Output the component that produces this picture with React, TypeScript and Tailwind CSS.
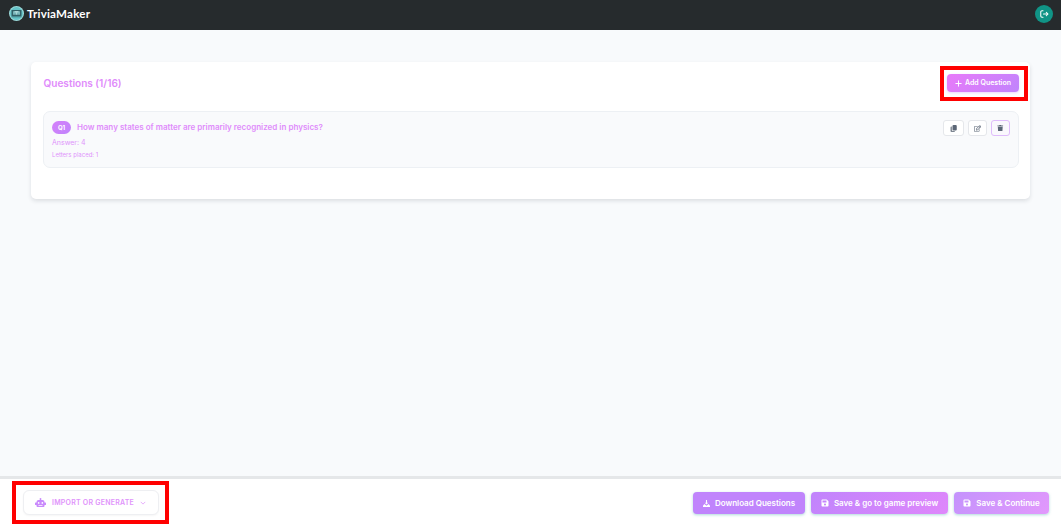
import React from "react";
import { FaSave, FaTrash, FaRegEdit } from "react-icons/fa";

function Logo() {
  return (
    <svg viewBox="0 0 30 30" className="size-[15px] shrink-0">
      <circle cx="15" cy="15" r="15" fill="#9bdada" />
      <circle cx="15" cy="15" r="13" fill="#65c3c8" />
      <rect x="5" y="8" width="20" height="12" rx="1" fill="#315f66" />
      <rect x="8" y="10.5" width="14" height="7" fill="#78b5b9" />
      <path d="M11 10h8v3h-3v4h-2v-4h-3z" fill="#a9d5d6" />
      <path d="M5 21.5h20" stroke="#315f66" strokeWidth="1.5" />
    </svg>
  );
}

function LogoutIcon() {
  return (
    <svg viewBox="0 0 18 16" className="h-2 w-[9px]" fill="none" stroke="currentColor" strokeWidth="2.1" strokeLinecap="round" strokeLinejoin="round">
      <path d="M6 1.5H4A2.5 2.5 0 0 0 1.5 4v8A2.5 2.5 0 0 0 4 14.5h2M7 8h9M12.5 4.5 16 8l-3.5 3.5" />
    </svg>
  );
}

function CopyIcon() {
  return (
    <svg viewBox="0 0 14 14" className="size-[7px]" fill="currentColor">
      <rect x="5" y="0" width="8.5" height="11" rx="2" />
      <path d="M3.8 3H3a2 2 0 0 0-2 2v7a2 2 0 0 0 2 2h5a2 2 0 0 0 2-1.8H6a2.2 2.2 0 0 1-2.2-2.2z" opacity=".8" />
    </svg>
  );
}

function DownloadIcon() {
  return (
    <svg viewBox="0 0 16 16" className="size-[7px] shrink-0" fill="currentColor">
      <path d="M6.8 0h2.4v6H12l-4 4.5L4 6h2.8zM3 9l5 4 5-4 3 4v3H0v-3z" />
    </svg>
  );
}

function RobotIcon() {
  return (
    <svg viewBox="0 0 22 18" className="mr-[6px] h-[9px] w-[11px] text-[#c98afc]">
      <path fill="currentColor" fillRule="evenodd" d="M11 0a2 2 0 0 1 1 3.7V4h3a4 4 0 0 1 4 4v1h2a1 1 0 0 1 1 1v3a1 1 0 0 1-1 1h-2v2a2 2 0 0 1-2 2H5a2 2 0 0 1-2-2v-2H1a1 1 0 0 1-1-1v-3a1 1 0 0 1 1-1h2V8a4 4 0 0 1 4-4h3v-.3A2 2 0 0 1 11 0M7.3 8.2a1.7 1.7 0 1 0 0 3.4 1.7 1.7 0 0 0 0-3.4m7.4 0a1.7 1.7 0 1 0 0 3.4 1.7 1.7 0 0 0 0-3.4M7 14v1.4h8V14z" />
    </svg>
  );
}

export default function App() {
  return (
    <div className="flex h-[525px] w-[1061px] flex-col overflow-hidden bg-[#f8fafc] font-['Inter',sans-serif]">
      <header className="flex h-[30px] shrink-0 items-center justify-between bg-[#262b2d] pr-2 pl-[9px]">
        <div className="flex items-center gap-[3px] pb-[3px]">
          <Logo />
          <span className="font-['Lato',sans-serif] text-[11.6px] leading-[14px] font-bold tracking-[0.2px] text-white">TriviaMaker</span>
        </div>
        <button aria-label="Log out" className="mb-[2px] flex size-[18px] items-center justify-center rounded-full bg-[#109486] text-white">
          <LogoutIcon />
        </button>
      </header>

      <main className="flex-1 px-[31px] pt-8">
        <section className="h-[137px] rounded-[5px] bg-white pt-1 pr-[11px] pl-3 shadow-[0_2px_4px_rgba(15,23,42,0.12)]">
          <div className="-mr-[9px] flex h-[35px] items-center justify-between">
            <h1 className="ml-[0.5px] text-[10.05px] font-semibold text-[#df8cfb]">Questions (1/16)</h1>
            <div className="flex h-[35px] w-[88px] items-start justify-start border-4 border-[#ff0000] pt-1 pl-[3px]">
              <button className="flex h-[18px] w-[72px] items-center justify-center gap-[3px] rounded-[4px] bg-linear-135 from-[#e879f9] to-[#c084fc] text-[7px] font-semibold whitespace-nowrap text-white shadow-[0_1px_3px_rgba(192,132,252,0.35)]">
                <svg viewBox="0 0 8 8" className="size-[7px]" stroke="currentColor" strokeWidth="1.1"><path d="M4 .5v7M.5 4h7" /></svg>
                Add Question
              </button>
            </div>
          </div>
          <article className="mt-[10px] flex h-[57px] justify-between rounded-[7px] border border-[#edf0f4] bg-[#f9fafc] px-2 pt-2">
            <div>
              <div className="flex h-[14px] items-center gap-[6px]">
                <span className="flex h-[13px] w-[19px] items-center justify-center rounded-full bg-linear-135 from-[#d580fa] to-[#c084fc] text-[6px] font-bold text-white">Q1</span>
                <h2 className="text-[8.04px] font-semibold text-[#df8cfb]">How many states of matter are primarily recognized in physics?</h2>
              </div>
              <p className="mt-[3px] text-[7px] leading-[12px] text-[#df94fb]">Answer: 4</p>
              <p className="text-[6px] leading-[12px] text-[#df94fb]">Letters placed: 1</p>
            </div>
            <div className="flex gap-[4px] text-[#5b6676]">
              <button aria-label="Copy" className="flex h-4 w-[21px] items-center justify-center rounded-[3px] border border-[#e5e7eb] bg-white"><CopyIcon /></button>
              <button aria-label="Edit" className="flex h-4 w-[19px] items-center justify-center rounded-[3px] border border-[#e5e7eb] bg-white"><FaRegEdit className="size-[7px]" /></button>
              <button aria-label="Delete" className="flex h-4 w-[19px] items-center justify-center rounded-[3px] border border-[#dfbcfb] bg-[#faf8fd]"><FaTrash className="size-[6.5px]" /></button>
            </div>
          </article>
        </section>
      </main>

      <footer className="flex h-[49px] shrink-0 items-start justify-between border-t-[3px] border-[#e5e7e9] bg-white pr-3 pl-3">
        <div className="mt-[2px] flex h-[43px] w-[157px] items-center justify-center border-4 border-[#ff0000]">
          <button className="flex h-[25px] w-[136px] items-center justify-center rounded-[6px] border border-[#eeeff2] bg-white text-[7px] font-semibold tracking-[0.23px] whitespace-nowrap text-[#df94fb] shadow-[0_1px_2px_rgba(0,0,0,0.04)]">
            <RobotIcon />
            <span className="pt-px">IMPORT OR GENERATE</span>
            <svg viewBox="0 0 8 8" className="ml-[6px] size-[6px]" fill="none" stroke="currentColor"><path d="m1 2.5 3 3 3-3" /></svg>
          </button>
        </div>
        <div className="mt-[13px] flex gap-[6px] text-[8.03px] font-semibold whitespace-nowrap text-white">
          <button className="flex h-[22px] w-[112px] items-center justify-center gap-[5px] rounded-[4px] bg-[#c084fc] shadow-[0_1px_3px_rgba(20,148,148,0.35)]"><DownloadIcon /><span className="pt-px">Download Questions</span></button>
          <button className="flex h-[22px] w-[137px] items-center justify-center gap-[5px] rounded-[4px] bg-linear-135 from-[#c084fc] to-[#df87fb] shadow-[0_1px_3px_rgba(20,148,148,0.35)]"><FaSave className="size-2" /><span className="pt-px">Save &amp; go to game preview</span></button>
          <button className="flex h-[22px] w-[95px] items-center justify-center gap-[5px] rounded-[4px] bg-linear-135 from-[#c493fc] to-[#e298fc] shadow-[0_1px_3px_rgba(20,148,148,0.35)]"><FaSave className="size-2" /><span className="pt-px">Save &amp; Continue</span></button>
        </div>
      </footer>
    </div>
  );
}
